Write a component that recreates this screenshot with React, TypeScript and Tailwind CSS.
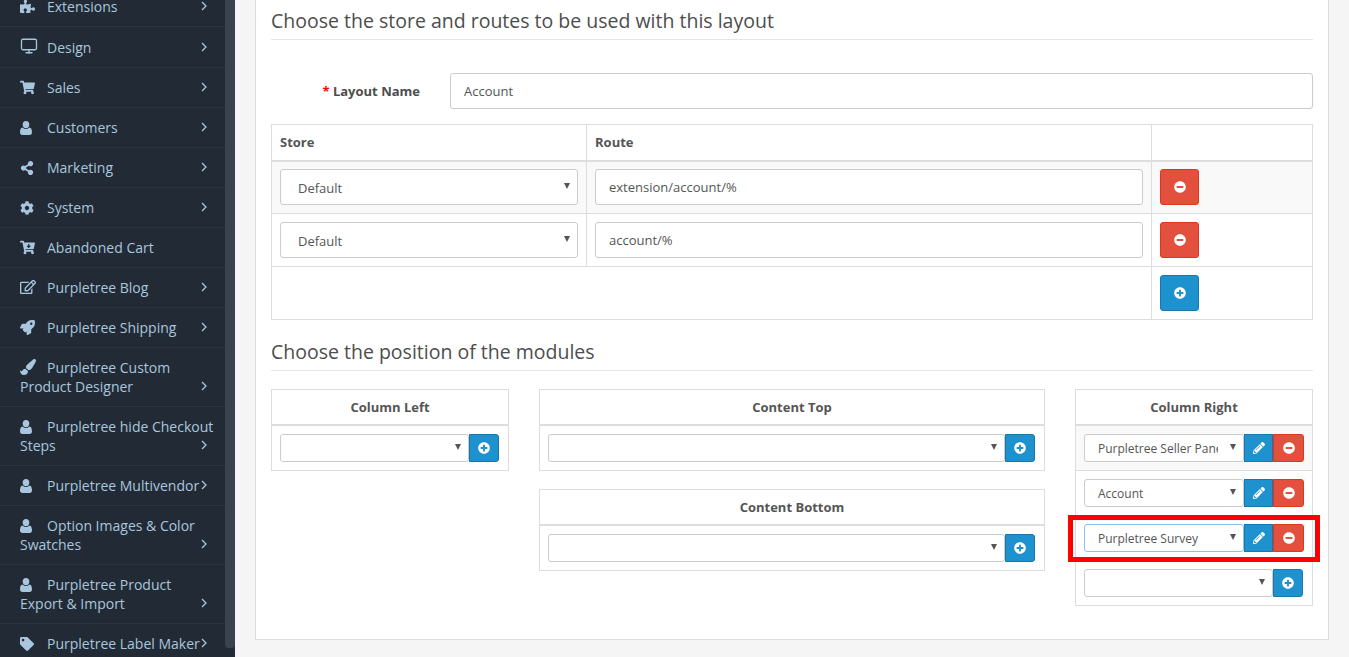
import { ReactNode } from "react";
import {
  FaCartArrowDown,
  FaCog,
  FaMinusCircle,
  FaPaintBrush,
  FaPencilAlt,
  FaPlusCircle,
  FaPuzzlePiece,
  FaRegEdit,
  FaRocket,
  FaShareAlt,
  FaShoppingCart,
  FaTag,
} from "react-icons/fa";
import { Monitor } from "lucide-react";

const UserIcon = () => (
  <svg width="12" height="14" viewBox="0 0 12 14" fill="currentColor">
    <ellipse cx="6" cy="3.6" rx="3.3" ry="3.6" />
    <path d="M2.4 6.4C3.3 7.3 4.6 7.9 6 7.9s2.700-.6 3.600-1.500C11.300 6.800 12 8.600 12 11.500 12 13 11 14 9.600 14H2.400C1 14 0 13 0 11.500 0 8.600.7 6.800 2.400 6.400z" />
  </svg>
);

const Chevron = () => (
  <svg
    width="6"
    height="10"
    viewBox="0 0 6 10"
    fill="none"
    stroke="currentColor"
    strokeWidth="1.3"
    className="absolute left-[201px] bottom-[15px]"
  >
    <path d="M1 1l4 4-4 4" />
  </svg>
);

const menu: { label: string; icon: ReactNode; arrow?: boolean }[] = [
  { label: "Extensions", icon: <FaPuzzlePiece size={15} /> },
  { label: "Design", icon: <Monitor size={18} strokeWidth={1.7} /> },
  { label: "Sales", icon: <FaShoppingCart size={15} /> },
  { label: "Customers", icon: <UserIcon /> },
  { label: "Marketing", icon: <FaShareAlt size={14} /> },
  { label: "System", icon: <FaCog size={14} /> },
  { label: "Abandoned Cart", icon: <FaCartArrowDown size={15} />, arrow: false },
  { label: "Purpletree Blog", icon: <FaRegEdit size={16} /> },
  { label: "Purpletree Shipping", icon: <FaRocket size={15} /> },
  { label: "Purpletree Custom Product Designer", icon: <FaPaintBrush size={16} /> },
  { label: "Purpletree hide Checkout Steps", icon: <UserIcon /> },
  { label: "Purpletree Multivendor", icon: <UserIcon /> },
  { label: "Option Images & Color Swatches", icon: <UserIcon /> },
  { label: "Purpletree Product Export & Import", icon: <UserIcon /> },
  { label: "Purpletree Label Maker", icon: <FaTag size={14} /> },
];

const Select = ({ value, className, focus }: { value: string; className: string; focus?: boolean }) => (
  <div className={`relative ${className}`}>
    <select
      defaultValue={value}
      className={`w-full h-full appearance-none bg-white rounded-[3px] border pl-[13px] pr-[25px] pt-[2px] text-[12px] text-[#555] ${
        focus ? "border-[#8fc0e6]" : "border-[#ccc]"
      }`}
    >
      <option value={value}>{value}</option>
    </select>
    <span className="absolute right-[8px] top-1/2 -translate-y-[4px] w-0 h-0 border-x-[3px] border-x-transparent border-t-[6px] border-t-[#555] pointer-events-none" />
  </div>
);

const TextInput = ({ value }: { value: string }) => (
  <input
    readOnly
    value={value}
    className="w-full h-[36px] rounded-[3px] border border-[#ccc] bg-white px-[13px] text-[13px] text-[#555]"
  />
);

const BigButton = ({ add }: { add?: boolean }) => (
  <button
    className={`w-[39px] h-[36px] flex items-center justify-center rounded-[3px] border text-white ${
      add ? "bg-[#1e91cf] border-[#1978ab]" : "bg-[#e3503e] border-[#e0351f]"
    }`}
  >
    {add ? <FaPlusCircle size={12} /> : <FaMinusCircle size={12} />}
  </button>
);

const ModuleRow = ({ value, striped, focus }: { value: string; striped?: boolean; focus?: boolean }) => (
  <div className={`relative h-[45px] flex items-start pt-[8px] px-[8px] border-b border-[#ddd] ${striped ? "bg-[#f9f9f9]" : "bg-white"}`}>
    <Select value={value} focus={focus} className="w-[160px] h-[28px]" />
    <button className="w-[29px] h-[28px] flex items-center justify-center bg-[#1e91cf] border border-[#1978ab] text-white">
      <FaPencilAlt size={12} />
    </button>
    <button className="w-[31px] h-[28px] flex items-center justify-center bg-[#e3503e] border border-[#e0351f] rounded-r-[3px] text-white">
      <FaMinusCircle size={12} />
    </button>
    {focus && (
      <div className="absolute -left-[8px] -right-[8px] -top-[1px] h-[47px] border-[5px] border-[#f00] pointer-events-none" />
    )}
  </div>
);

const AddRow = ({ selectWidth }: { selectWidth: string }) => (
  <div className="h-[45px] flex items-start pt-[8px] px-[8px] border-b border-[#ddd] bg-white">
    <Select value="" className={`${selectWidth} h-[28px]`} />
    <button className="w-[30px] h-[28px] flex items-center justify-center bg-[#1e91cf] border border-[#1978ab] rounded-r-[3px] text-white">
      <FaPlusCircle size={12} />
    </button>
  </div>
);

const ModuleBox = ({ title, children }: { title: string; children: ReactNode }) => (
  <div className="border-x border-t border-[#ddd]">
    <div className="h-[36px] pt-[2px] flex items-center justify-center border-b-2 border-[#ddd] font-bold text-[13px] text-[#555]">
      {title}
    </div>
    {children}
  </div>
);

const Heading = ({ children }: { children: ReactNode }) => (
  <h3 className="h-[40px] border-b border-[#e5e5e5] text-[19.5px] leading-[42px] text-[#4d4d4d]">{children}</h3>
);

export default function App() {
  return (
    <div className="h-[657px] overflow-hidden flex bg-[#f5f5f5] font-['Open_Sans',sans-serif] text-[12px] text-[#666]">
      <aside className="w-[235px] shrink-0 flex bg-[#222b35]">
        <nav className="w-[225px] -mt-[13px] text-[14px] leading-[19px] text-[#a9c6de]">
          {menu.map((item) => (
            <a key={item.label} className="relative block pl-[20px] pr-[10px] py-[10px] border-b border-[#2b3542]">
              <span className="inline-flex w-[27px] align-[-2px]">{item.icon}</span>
              {item.label}
              {item.arrow !== false && <Chevron />}
            </a>
          ))}
        </nav>
        <div className="w-[10px] h-[648px] bg-[#3a424e] rounded-b-[4px]" />
      </aside>

      <main className="flex-1 px-[20px]">
        <div className="h-[640px] bg-white border-x border-b border-[#ddd] px-[15px]">
          <Heading>Choose the store and routes to be used with this layout</Heading>

          <div className="mt-[33px] flex items-center">
            <label className="w-[149px] pt-[1px] text-right font-bold text-[13px] text-[#4d4d4d]">
              <span className="text-[#f00]">* </span>Layout Name
            </label>
            <input
              readOnly
              value="Account"
              className="ml-[30px] flex-1 h-[36px] rounded-[3px] border border-[#ccc] bg-white px-[13px] text-[13px] text-[#555]"
            />
          </div>

          <table className="mt-[15px] w-full table-fixed border-collapse border border-[#ddd] text-[13px]">
            <colgroup>
              <col className="w-[315px]" />
              <col className="w-[565px]" />
              <col />
            </colgroup>
            <thead>
              <tr className="h-[36px] border-b-2 border-[#ddd]">
                <th className="border border-[#ddd] border-b-2 px-[8px] text-left font-bold text-[#555]">Store</th>
                <th className="border border-[#ddd] border-b-2 px-[8px] text-left font-bold text-[#555]">Route</th>
                <th className="border border-[#ddd] border-b-2" />
              </tr>
            </thead>
            <tbody>
              <tr className="h-[53px] bg-[#f9f9f9]">
                <td className="border border-[#ddd] px-[8px]">
                  <Select value="Default" className="h-[36px] [&_select]:pl-[17px] [&_select]:pt-[3px] [&_select]:text-[13px]" />
                </td>
                <td className="border border-[#ddd] px-[8px]">
                  <TextInput value="extension/account/%" />
                </td>
                <td className="border border-[#ddd] px-[8px]">
                  <BigButton />
                </td>
              </tr>
              <tr className="h-[53px]">
                <td className="border border-[#ddd] px-[8px]">
                  <Select value="Default" className="h-[36px] [&_select]:pl-[17px] [&_select]:pt-[3px] [&_select]:text-[13px]" />
                </td>
                <td className="border border-[#ddd] px-[8px]">
                  <TextInput value="account/%" />
                </td>
                <td className="border border-[#ddd] px-[8px]">
                  <BigButton />
                </td>
              </tr>
              <tr className="h-[53px]">
                <td colSpan={2} className="border border-[#ddd]" />
                <td className="border border-[#ddd] px-[8px]">
                  <BigButton add />
                </td>
              </tr>
            </tbody>
          </table>

          <div className="mt-[11px]">
            <Heading>Choose the position of the modules</Heading>
          </div>

          <div className="mt-[18px] grid grid-cols-[238px_506px_238px] gap-x-[30px] items-start">
            <ModuleBox title="Column Left">
              <AddRow selectWidth="w-[189px]" />
            </ModuleBox>
            <div className="flex flex-col gap-[18px]">
              <ModuleBox title="Content Top">
                <AddRow selectWidth="w-[457px]" />
              </ModuleBox>
              <ModuleBox title="Content Bottom">
                <AddRow selectWidth="w-[457px]" />
              </ModuleBox>
            </div>
            <ModuleBox title="Column Right">
              <ModuleRow value="Purpletree Seller Panel" striped />
              <ModuleRow value="Account" />
              <ModuleRow value="Purpletree Survey" focus />
              <AddRow selectWidth="w-[189px]" />
            </ModuleBox>
          </div>
        </div>
      </main>
    </div>
  );
}
